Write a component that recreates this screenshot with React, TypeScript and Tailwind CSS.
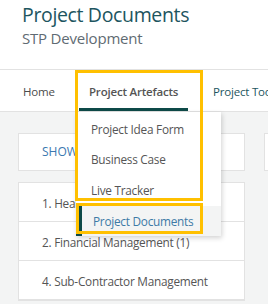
import React from "react";

const menuItems = ["Project Idea Form", "Business Case", "Live Tracker"];

const rows = [
  "1. Health & Safety Management",
  "2. Financial Management (1)",
  "4. Sub-Contractor Management",
];

const App: React.FC = () => {
  return (
    <div
      className="relative h-[304px] w-[268px] overflow-hidden bg-white"
      style={{ fontFamily: '"Open Sans", "Noto Sans", sans-serif' }}
    >
      {/* page title */}
      <div className="h-[69px] px-[22px] pt-[1px]">
        <div className="text-[19.5px] leading-[28px] tracking-[-0.35px] text-[#1d5560]">
          Project Documents
        </div>
        <div className="text-[15px] leading-[18px] tracking-[-0.2px] text-[#5f6b73]">
          STP Development
        </div>
      </div>

      {/* nav */}
      <div className="flex h-[43px] items-center border-y border-[#e2e2e2] pt-[3px] text-[11.5px] tracking-[-0.2px] text-[#4b4b4b] whitespace-nowrap">
        <div className="w-[89px] shrink-0 pl-[23px]">Home</div>
        <div className="relative flex h-full w-[124px] shrink-0 items-center font-semibold text-[#555]">
          Project Artefacts
          <div className="absolute bottom-0 left-[-10px] h-[3px] w-[109px] bg-[#0e4a48]" />
        </div>
        <div className="shrink-0 text-[#1d5560]">Project Tools</div>
      </div>

      {/* body */}
      <div className="flex h-full gap-[19px] bg-[#f3f4f4] pl-[18px] pt-[21px]">
        <div className="flex w-[227px] shrink-0 flex-col gap-[11px]">
          <div className="flex h-[38px] items-center border border-[#e2e2e2] bg-white pl-[23px] text-[12px] text-[#3b78b0]">
            SHOW ALL
          </div>
          <div className="border border-[#e2e2e2] bg-white text-[11.8px] tracking-[-0.25px] text-[#555]">
            {rows.map((r) => (
              <div
                key={r}
                className="flex h-[39px] items-center border-b border-[#e2e2e2] pl-[23px] pt-[3px] whitespace-nowrap"
              >
                {r}
              </div>
            ))}
          </div>
        </div>
        <div className="flex w-[60px] shrink-0 flex-col">
          <div className="h-[38px] border border-[#e2e2e2] bg-white" />
        </div>
      </div>

      {/* dropdown */}
      <div className="absolute left-[76px] top-[112px] w-[145px] bg-white pt-[2px] text-[11.8px] tracking-[-0.25px] text-[#555] shadow-[1px_2px_5px_rgba(0,0,0,0.18)]">
        {menuItems.map((m) => (
          <div key={m} className="flex h-[30.5px] items-center pl-[15px] pt-[1px]">
            {m}
          </div>
        ))}
        <div className="flex h-[30px] items-center border-l-[6px] border-[#0e4a48] bg-[#f3f4f4] pl-[11px] pt-[2px] text-[#3d7aa6]">
          Project Documents
        </div>
      </div>

      {/* highlight boxes */}
      <div className="absolute left-[75px] top-[70px] h-[131px] w-[128px] border-[3px] border-[#ffc000]" />
      <div className="absolute left-[76px] top-[203px] h-[31px] w-[127px] border-[3px] border-[#ffc000]" />
    </div>
  );
};

export default App;
